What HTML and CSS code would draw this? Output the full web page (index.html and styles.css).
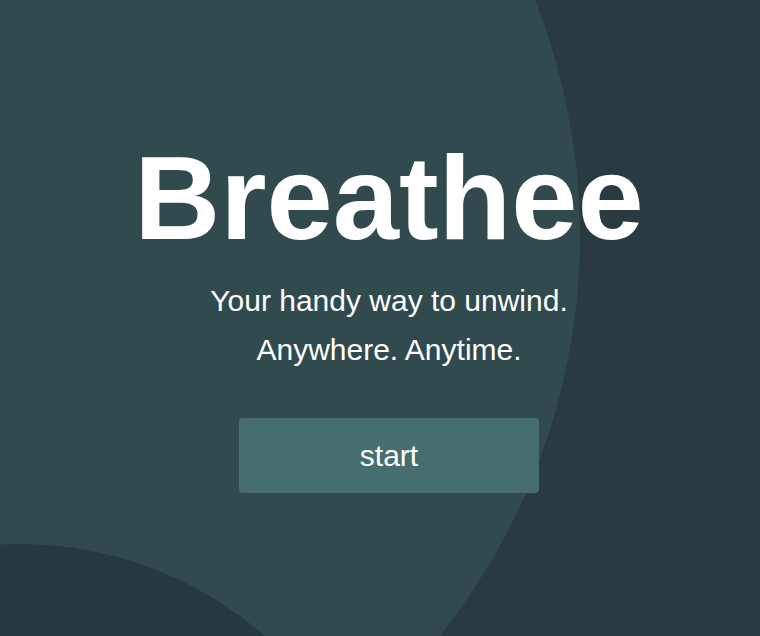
FILE: index.html
```html
<!DOCTYPE html>
<html lang="en">
<head>
<meta charset="utf-8">
<title>Breathee</title>
<link rel="stylesheet" href="styles.css">
</head>
<body>
<div class="stage">
  <div class="bg-circle big"></div>
  <div class="bg-circle small"></div>
  <main class="hero">
    <h1 class="title">Breathee</h1>
    <p class="tagline">Your handy way to unwind.</p>
    <p class="tagline">Anywhere. Anytime.</p>
    <button class="start-btn">start</button>
  </main>
</div>
</body>
</html>
```
FILE: styles.css
```css
html, body {
  margin: 0;
  padding: 0;
}
body {
  background: #293b41;
  font-family: "Liberation Sans", Arial, sans-serif;
  color: #ffffff;
}
.stage {
  position: relative;
  height: 100vh;
  overflow: hidden;
}
.bg-circle {
  position: absolute;
  border-radius: 50%;
}
.bg-circle.big {
  width: 1280px;
  height: 1280px;
  left: -700px;
  top: -404px;
  background: #314a4e;
}
.bg-circle.small {
  width: 744px;
  height: 744px;
  left: -352px;
  top: 544px;
  background: #253a40;
}
.hero {
  position: relative;
  display: flex;
  flex-direction: column;
  align-items: center;
  padding-top: 136px;
  padding-left: 18px;
}
.title {
  margin: 0;
  font-size: 119px;
  font-weight: 700;
  line-height: 124px;
}
.tagline {
  margin: 0;
  font-size: 30px;
  line-height: 49px;
}
.tagline:first-of-type {
  margin-top: 16px;
}
.start-btn {
  margin-top: 44px;
  width: 300px;
  height: 75px;
  border: none;
  border-radius: 4px;
  background: #466e6e;
  color: #ffffff;
  font-family: "Liberation Sans", Arial, sans-serif;
  font-size: 30px;
}
```
